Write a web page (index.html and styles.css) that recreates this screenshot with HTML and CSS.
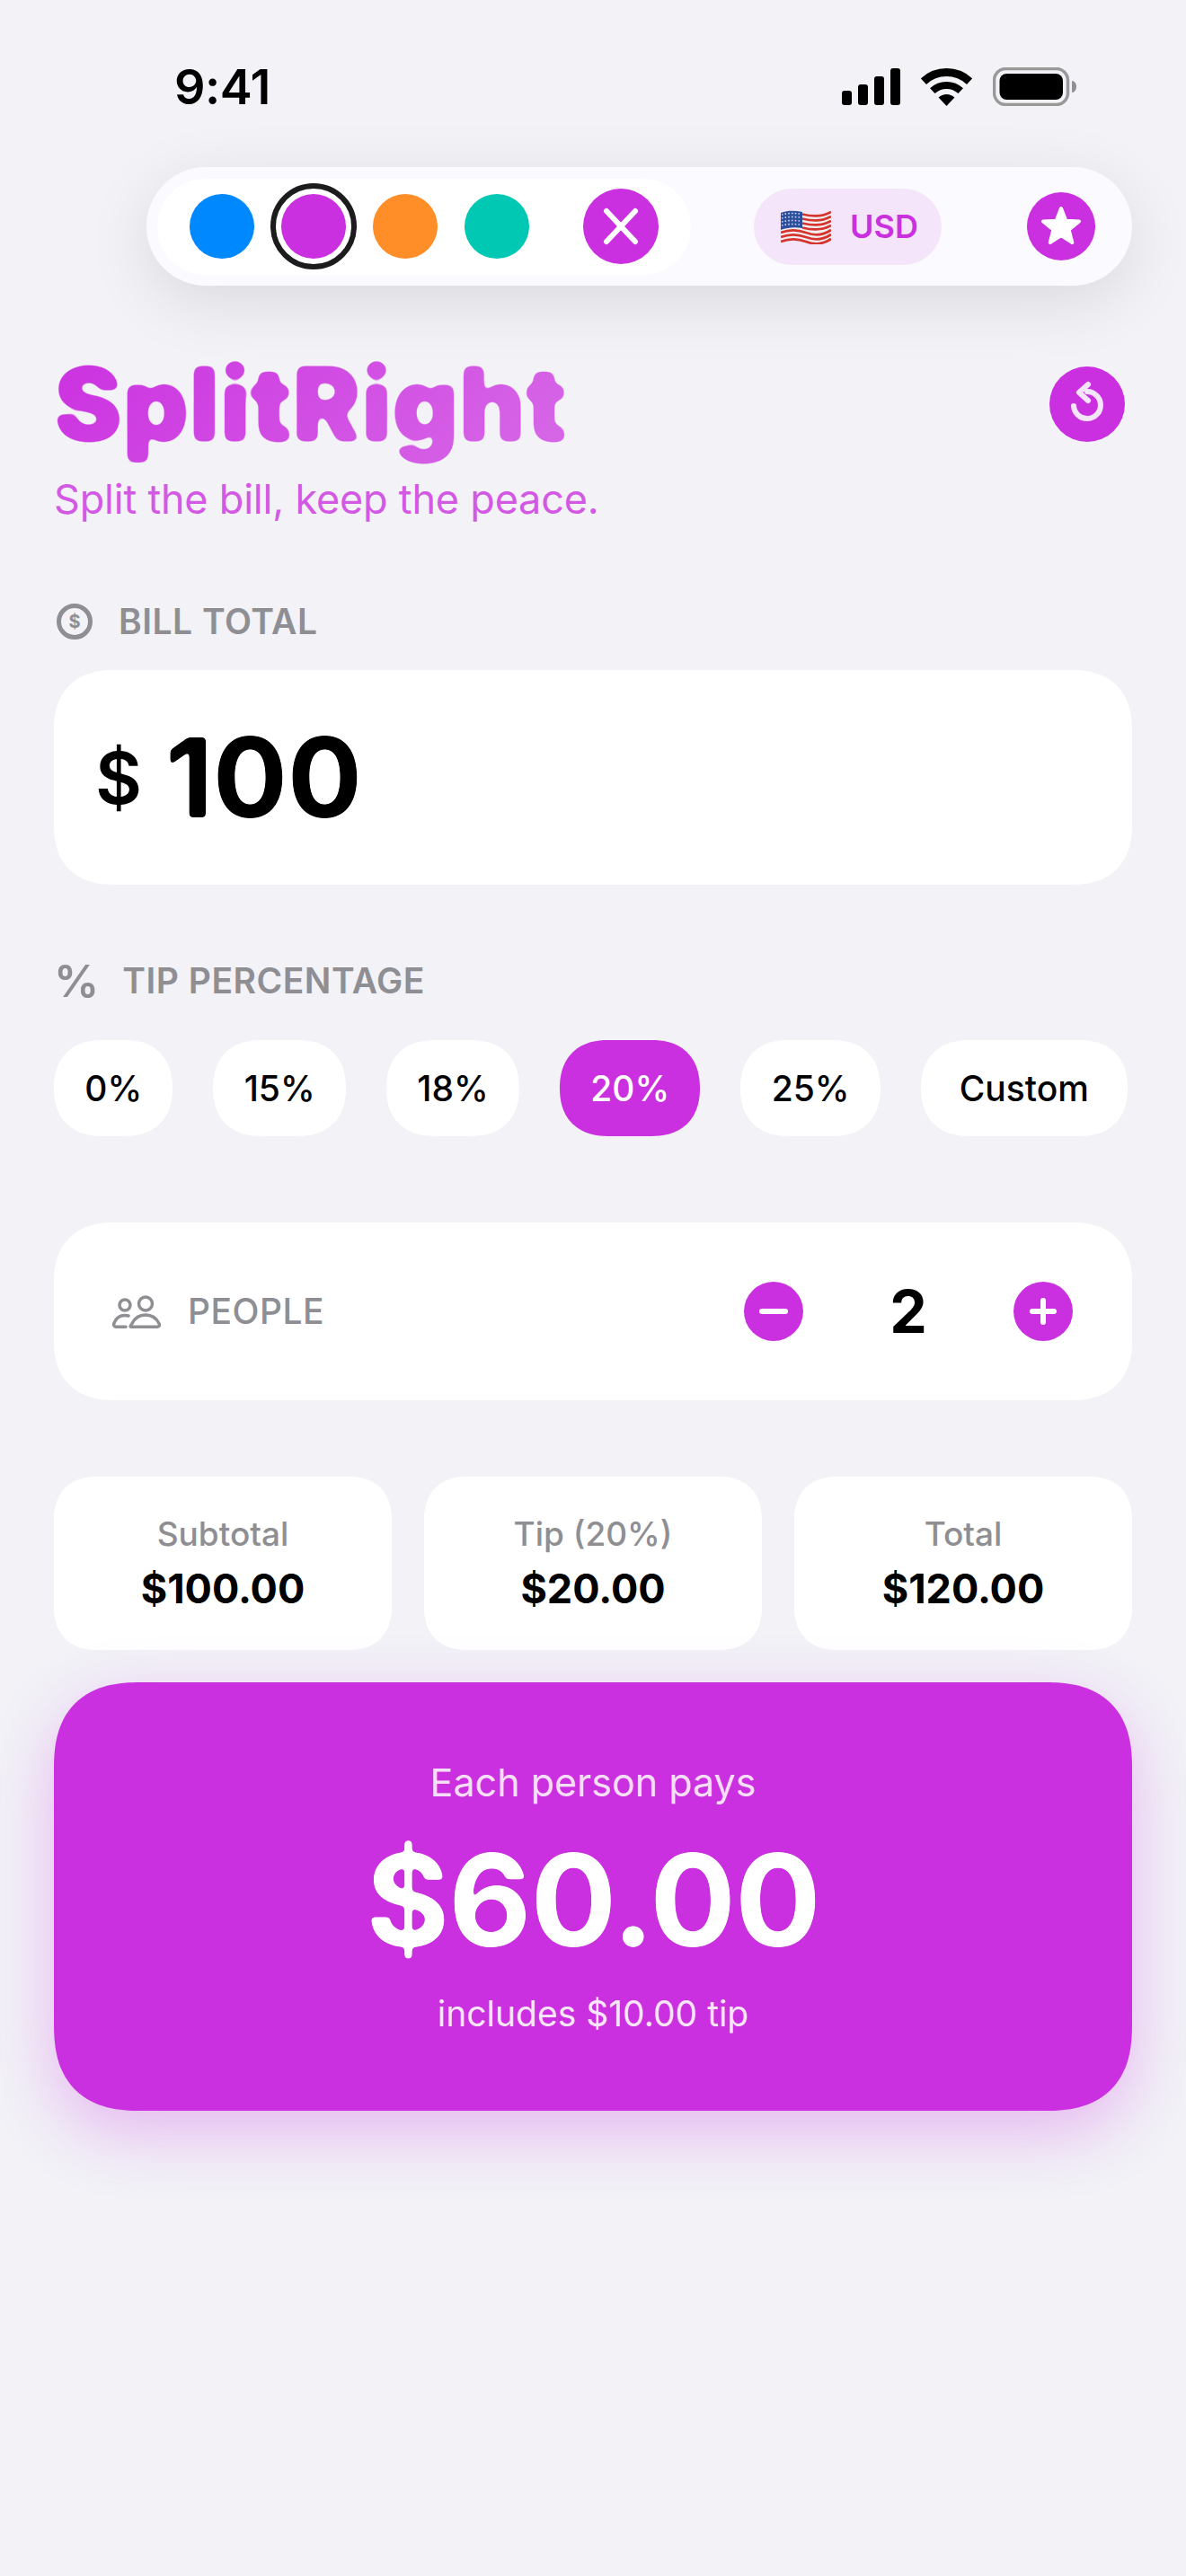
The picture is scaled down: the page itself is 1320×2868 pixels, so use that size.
FILE: index.html
```html
<!DOCTYPE html>
<html lang="en">
<head>
<meta charset="utf-8">
<title>SplitRight</title>
<link rel="stylesheet" href="styles.css">
</head>
<body>
<svg class="defs" aria-hidden="true">
  <filter id="round-lg" x="-5%" y="-10%" width="110%" height="120%" color-interpolation-filters="sRGB">
    <feGaussianBlur stdDeviation="4.5"/>
    <feComponentTransfer><feFuncA type="linear" slope="9" intercept="-3.6"/></feComponentTransfer>
  </filter>
  <filter id="round-sm" x="-5%" y="-10%" width="110%" height="120%" color-interpolation-filters="sRGB">
    <feGaussianBlur stdDeviation="2"/>
    <feComponentTransfer><feFuncA type="linear" slope="7" intercept="-3"/></feComponentTransfer>
  </filter>
</svg>
<main class="page">
  <header class="status">
    <span class="time">9:41</span>
    <div class="status-icons">
      <svg class="signal" width="65" height="41" viewBox="0 0 65 41"><rect x="0" y="25" width="11" height="16" rx="3"/><rect x="18" y="18" width="11" height="23" rx="3"/><rect x="36" y="9" width="11" height="32" rx="3"/><rect x="54" y="0" width="11" height="41" rx="3"/></svg>
      <svg class="wifi" width="57" height="42" viewBox="0 0 57 42"><path d="M2.9 14.6A37.5 37.5 0 0 1 54.1 14.6" fill="none" stroke="#000" stroke-width="9"/><path d="M12.8 25.2A23 23 0 0 1 44.2 25.2" fill="none" stroke="#000" stroke-width="8"/><path d="M28.5 42L19.6 32.5A13 13 0 0 1 37.4 32.5Z"/></svg>
      <svg class="battery" width="93" height="43" viewBox="0 0 93 43"><rect x="1.5" y="1.5" width="82" height="40" rx="13" fill="none" stroke="#999" stroke-width="3.5"/><rect x="7.5" y="7" width="70.5" height="29" rx="8"/><path d="M88 15c3 0 5 3 5 6.500s-2 6.500-5 6.500z" fill="#8e8e93"/></svg>
    </div>
  </header>

  <nav class="toolbar">
    <div class="palette">
      <span class="dot dot-blue"></span>
      <span class="dot dot-purple dot-active"></span>
      <span class="dot dot-orange"></span>
      <span class="dot dot-teal"></span>
      <span class="round-btn close-btn"><svg width="84" height="84" viewBox="0 0 84 84"><path d="M26 25L58 59M58 25L26 59" fill="none" stroke="#fff" stroke-width="6" stroke-linecap="round"/></svg></span>
    </div>
    <div class="currency">
      <svg class="flag" width="56" height="40" viewBox="0 0 56 40">
        <path d="M0 5C10 1 20 2 28 5S46 9 56 2V34C46 40 36 38 28 35S10 31 0 38Z" fill="#f4f0f2"/>
        <g fill="none" stroke="#d5352f" stroke-width="2.800">
          <path d="M24 6.500C34 9 46 10 56 4"/>
          <path d="M24 11.500C34 14 46 15 56 9"/>
          <path d="M24 16.500C34 19 46 20 56 14"/>
          <path d="M24 21.500C34 24 46 25 56 19"/>
          <path d="M0 27C10 23 20 24 28 27S46 31 56 24"/>
          <path d="M0 32C10 28 20 29 28 32S46 36 56 29"/>
          <path d="M0 37C10 33 20 34 28 37S46 41 56 34"/>
        </g>
        <path d="M0 5C8 2 16 2.500 24 4V22C16 20.500 8 21 0 24Z" fill="#2c4f9f"/>
        <g fill="none" stroke="#dfe6f5" stroke-width="1.500" stroke-dasharray="1.500 2.200">
          <path d="M1 7C8 5 16 5 23 6.500"/>
          <path d="M1 11C8 9 16 9 23 10.500"/>
          <path d="M1 15C8 13 16 13 23 14.500"/>
          <path d="M1 19C8 17 16 17 23 18.500"/>
        </g>
      </svg>
      <span class="currency-code">USD</span>
    </div>
    <span class="round-btn star-btn"><svg width="76" height="76" viewBox="0 0 76 76"><path d="M38 18L43.300 31.700L58 32.500L46.600 41.800L50.300 56L38 48L25.700 56L29.400 41.800L18 32.500L32.700 31.700Z" fill="#fff" stroke="#fff" stroke-width="4" stroke-linejoin="round"/></svg></span>
  </nav>

  <section class="hero-head">
    <div class="brand">
      <h1 class="title">SplitRight</h1>
      <p class="tagline">Split the bill, keep the peace.</p>
    </div>
    <span class="round-btn reset-btn"><svg width="84" height="84" viewBox="0 0 84 84"><path d="M27 44A15 15 0 1 0 42 28" fill="none" stroke="#f5e5fa" stroke-width="6" stroke-linecap="round"/><path d="M43 20L33 29L43 38" fill="none" stroke="#f5e5fa" stroke-width="6" stroke-linecap="round" stroke-linejoin="round"/></svg></span>
  </section>

  <div class="label label-bill"><span class="label-coin">$</span><span>BILL TOTAL</span></div>
  <div class="card bill-card">
    <span class="bill-currency">$</span>
    <span class="bill-value">100</span>
  </div>

  <div class="label label-tip"><span class="label-percent">%</span><span>TIP PERCENTAGE</span></div>
  <div class="chips">
    <span class="chip">0%</span>
    <span class="chip">15%</span>
    <span class="chip">18%</span>
    <span class="chip chip-active">20%</span>
    <span class="chip">25%</span>
    <span class="chip chip-wide">Custom</span>
  </div>

  <div class="card people-card">
    <svg class="people-icon" width="54" height="37" viewBox="0 0 54 37" fill="none" stroke="#8e8e93" stroke-width="3.500"><circle cx="14" cy="11" r="6"/><circle cx="37" cy="9.500" r="7.500"/><path d="M21 35.200H50C52.500 35.200 53 33.500 52 31.500C49 25.500 43.500 22 37 22S25 25.500 22 31.500C21 33.500 19 35.200 21 35.200Z" stroke-linejoin="round"/><path d="M18 23C16.800 22.600 15.500 22.400 14 22.400C8.500 22.400 4 25.500 2 31C1.200 33.500 2 35.200 4.500 35.200H15" stroke-linecap="round"/></svg>
    <span class="people-label">PEOPLE</span>
    <div class="stepper">
      <span class="round-btn step-btn"><svg width="66" height="66" viewBox="0 0 66 66"><path d="M20 33H46" stroke="#fff" stroke-width="6" stroke-linecap="round"/></svg></span>
      <span class="count">2</span>
      <span class="round-btn step-btn"><svg width="66" height="66" viewBox="0 0 66 66"><path d="M21 33H45M33 21V45" stroke="#fff" stroke-width="6" stroke-linecap="round"/></svg></span>
    </div>
  </div>

  <div class="stats">
    <div class="stat"><span class="stat-label">Subtotal</span><span class="stat-value">$100.00</span></div>
    <div class="stat"><span class="stat-label">Tip (20%)</span><span class="stat-value">$20.00</span></div>
    <div class="stat"><span class="stat-label">Total</span><span class="stat-value">$120.00</span></div>
  </div>

  <div class="result">
    <span class="result-label">Each person pays</span>
    <span class="result-value">$60.00</span>
    <span class="result-note">includes $10.00 tip</span>
  </div>
</main>
</body>
</html>
```

FILE: styles.css
```css
* { box-sizing: border-box; }

html, body { margin: 0; padding: 0; }

body {
  background: #f2f2f7;
  color: #000;
  font-family: Inter, "Noto Sans", "Liberation Sans", sans-serif;
}

.defs { position: absolute; width: 0; height: 0; }

.page {
  display: flex;
  flex-direction: column;
  min-height: 2868px;
  padding: 0 60px;
}

/* status bar */
.status {
  display: flex;
  justify-content: space-between;
  align-items: flex-start;
  height: 186px;
  padding: 70px 62px 0 134px;
}
.time { font-size: 54px; line-height: 54px; font-weight: 600; letter-spacing: -0.5px; }
.status-icons { display: flex; align-items: center; gap: 23px; padding-top: 5px; }
.status-icons svg { display: block; }

/* toolbar */
.toolbar {
  display: flex;
  align-items: center;
  align-self: flex-end;
  width: 1097px;
  height: 132px;
  padding: 0 41px 0 12px;
  border-radius: 66px;
  background: #fbfaff;
  box-shadow: 0 18px 72px rgba(0, 0, 0, 0.1);
}
.palette {
  display: flex;
  align-items: center;
  gap: 30px;
  width: 594px;
  height: 107px;
  padding-left: 36px;
  border-radius: 54px;
  background: #fff;
}
.dot { width: 72px; height: 72px; border-radius: 50%; flex: none; }
.dot-blue { background: #0088ff; }
.dot-purple { background: #cb30e0; }
.dot-orange { background: #ff8d28; }
.dot-teal { background: #00c8b3; }
.dot-active { outline: 6px solid #1c1c1e; outline-offset: 6px; }

.round-btn {
  display: flex;
  flex: none;
  align-items: center;
  justify-content: center;
  border-radius: 50%;
  background: #cb30e0;
}
.close-btn { width: 84px; height: 84px; margin-left: 30px; }
.star-btn { width: 76px; height: 76px; margin-left: auto; }
.reset-btn { width: 84px; height: 84px; margin-right: 8px; }
.step-btn { width: 66px; height: 66px; }
.round-btn svg { display: block; }

.currency {
  display: flex;
  align-items: center;
  gap: 21px;
  height: 85px;
  margin-left: 70px;
  padding: 0 26px 0 30px;
  border-radius: 42.5px;
  background: #f5e5fa;
}
.currency-code { font-size: 36px; line-height: 36px; font-weight: 600; color: #cb30e0; }
.flag { display: block; }

/* header */
.hero-head {
  display: flex;
  justify-content: space-between;
  align-items: flex-start;
  margin-top: 90px;
}
.brand { display: flex; flex-direction: column; align-items: flex-start; gap: 40px; }
.title {
  margin: -28px 0;
  padding: 0 3px 0 0;
  font-size: 114px;
  line-height: 140px;
  font-weight: 900;
  letter-spacing: 0.5px;
  background: linear-gradient(135deg, #cb30e0 0%, #d76ae7 100%);
  -webkit-background-clip: text;
  background-clip: text;
  color: transparent;
  filter: url(#round-lg);
}
.tagline {
  margin: 0;
  font-size: 45px;
  line-height: 48px;
  letter-spacing: -0.2px;
  color: #d359e4;
}

/* section labels */
.label {
  display: flex;
  align-items: center;
  height: 40px;
  font-size: 39px;
  line-height: 40px;
  font-weight: 600;
  letter-spacing: 0.5px;
  color: #8e8e93;
}
.label-bill { margin-top: 92px; padding-left: 3px; gap: 29px; }
.label-tip { margin-top: 87px; gap: 26px; }
.label-coin {
  display: flex;
  align-items: center;
  justify-content: center;
  width: 40px;
  height: 40px;
  border: 5px solid #8e8e93;
  border-radius: 50%;
  font-size: 20px;
  font-weight: 700;
  letter-spacing: 0;
}
.label-percent { font-size: 50px; font-weight: 600; letter-spacing: 0; }

/* cards */
.card {
  display: flex;
  align-items: center;
  border-radius: 66px;
  corner-shape: superellipse(1.2);
  background: #fff;
}
.bill-card { height: 239px; margin-top: 34px; padding-left: 46px; gap: 26px; }
.bill-currency { font-size: 80px; line-height: 80px; font-weight: 600; }
.bill-value { font-size: 123px; line-height: 123px; font-weight: 700; filter: url(#round-sm); }

/* tip chips */
.chips { display: flex; gap: 45px; margin-top: 46px; }
.chip {
  display: flex;
  align-items: center;
  height: 107px;
  padding: 0 34.25px;
  border-radius: 53.5px;
  corner-shape: superellipse(1.2);
  background: #fff;
  font-size: 39px;
  font-weight: 500;
}
.chip-active { background: #cb30e0; color: #fff; }
.chip-wide { padding: 0 43px; }

/* people */
.people-card { height: 198px; margin-top: 96px; padding: 0 66px 0 65px; }
.people-label {
  margin-left: 30px;
  font-size: 39px;
  line-height: 40px;
  font-weight: 500;
  letter-spacing: 0.5px;
  color: #8e8e93;
}
.stepper { display: flex; align-items: center; margin-left: auto; }
.count { width: 234px; text-align: center; font-size: 66px; line-height: 66px; font-weight: 700; }

/* stats */
.stats { display: grid; grid-template-columns: repeat(3, 1fr); gap: 36px; margin-top: 85px; }
.stat {
  display: flex;
  flex-direction: column;
  align-items: center;
  justify-content: center;
  gap: 20px;
  height: 193px;
  border-radius: 48px;
  corner-shape: superellipse(1.2);
  background: #fff;
}
.stat-label { font-size: 37px; line-height: 36px; font-weight: 500; color: #8e8e93; }
.stat-value { font-size: 45px; line-height: 45px; font-weight: 700; }

/* result */
.result {
  display: flex;
  flex-direction: column;
  align-items: center;
  height: 477px;
  margin-top: 36px;
  padding-top: 91px;
  border-radius: 96px;
  corner-shape: superellipse(1.3);
  background: #cb30e0;
  color: #fff;
  box-shadow: 0 24px 72px rgba(203, 48, 224, 0.3);
}
.result-label { font-size: 43px; line-height: 40px; color: rgba(255, 255, 255, 0.85); }
.result-value {
  margin-top: 39px;
  font-size: 142px;
  line-height: 144px;
  font-weight: 700;
  letter-spacing: -1px;
  filter: url(#round-sm);
}
.result-note { margin-top: 35px; font-size: 39px; line-height: 40px; color: rgba(255, 255, 255, 0.9); }
```
